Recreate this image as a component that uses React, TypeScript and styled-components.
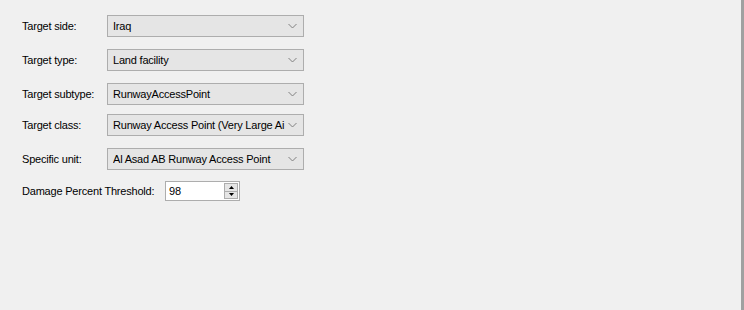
import React from 'react'
import styled, { createGlobalStyle } from 'styled-components'

const GlobalStyle = createGlobalStyle`
  html, body {
    margin: 0;
    padding: 0;
    background: #f0f0f0;
  }
  body {
    font-family: "Liberation Sans", Arial, sans-serif;
    font-size: 11px;
    letter-spacing: -0.2px;
    color: #000;
  }
`

const Panel = styled.div`
  width: 744px;
  height: 310px;
  box-sizing: border-box;
  background: #f0f0f0;
  border-right: 3px solid #a0a0a0;
  padding: 15px 0 0 22px;
  display: flex;
  flex-direction: column;
`

const Row = styled.div<{ $top?: number }>`
  display: flex;
  align-items: center;
  margin-top: ${p => p.$top ?? 0}px;
`

const Label = styled.span<{ $width?: number }>`
  width: ${p => p.$width ?? 85}px;
  flex: none;
  white-space: nowrap;
`

const Combo = styled.div`
  width: 197px;
  height: 22px;
  box-sizing: border-box;
  background: #e5e5e5;
  border: 1px solid #adadad;
  display: flex;
  align-items: center;
  padding-left: 5px;
  padding-right: 6px;
`

const ComboText = styled.span`
  flex: 1;
  overflow: hidden;
  white-space: nowrap;
`

const Chevron = styled.svg`
  flex: none;
  margin-left: 3px;
`

const Spin = styled.div`
  width: 75px;
  height: 20px;
  box-sizing: border-box;
  background: #fff;
  border: 1px solid #adadad;
  display: flex;
  align-items: center;
  padding: 0 1px 0 3px;
`

const SpinValue = styled.span`
  flex: 1;
`

const SpinButtons = styled.div`
  display: flex;
  flex-direction: column;
  width: 14px;
  height: 16px;
`

const SpinButton = styled.div`
  flex: 1;
  background: #e5e5e5;
  border: 1px solid #adadad;
  display: flex;
  align-items: center;
  justify-content: center;
  & + & {
    border-top: none;
  }
`

const ComboBox = ({ value }: { value: string }) => (
  <Combo>
    <ComboText>{value}</ComboText>
    <Chevron width="9" height="6" viewBox="0 0 9 6">
      <path d="M0.5 1 L4.5 5 L8.5 1" fill="none" stroke="#808080" strokeWidth="1" />
    </Chevron>
  </Combo>
)

const fields = [
  { label: 'Target side:', value: 'Iraq', top: 0 },
  { label: 'Target type:', value: 'Land facility', top: 12 },
  { label: 'Target subtype:', value: 'RunwayAccessPoint', top: 12 },
  { label: 'Target class:', value: 'Runway Access Point (Very Large Ai', top: 9 },
  { label: 'Specific unit:', value: 'Al Asad AB Runway Access Point', top: 12 },
]

const App = () => (
  <>
    <GlobalStyle />
    <Panel>
      {fields.map(f => (
        <Row key={f.label} $top={f.top}>
          <Label>{f.label}</Label>
          <ComboBox value={f.value} />
        </Row>
      ))}
      <Row $top={11}>
        <Label $width={143}>Damage Percent Threshold:</Label>
        <Spin>
          <SpinValue>98</SpinValue>
          <SpinButtons>
            <SpinButton>
              <svg width="5" height="3" viewBox="0 0 5 3"><path d="M2.5 0 L5 3 L0 3 Z" fill="#000" /></svg>
            </SpinButton>
            <SpinButton>
              <svg width="5" height="3" viewBox="0 0 5 3"><path d="M0 0 L5 0 L2.5 3 Z" fill="#000" /></svg>
            </SpinButton>
          </SpinButtons>
        </Spin>
      </Row>
    </Panel>
  </>
)

export default App
